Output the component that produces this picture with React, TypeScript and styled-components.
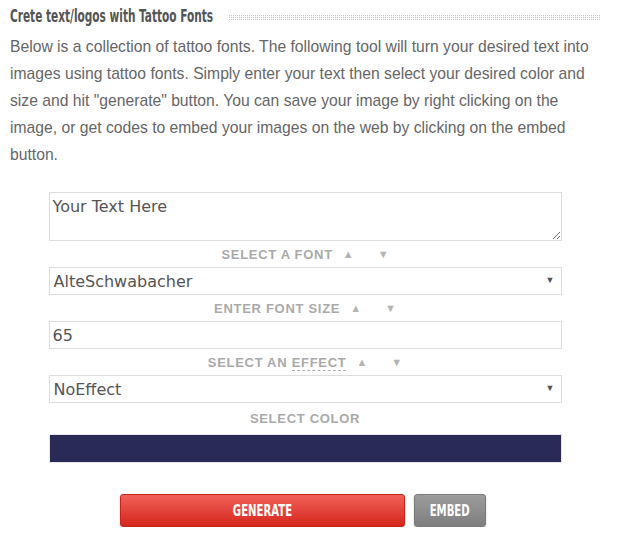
import React from "react";
import styled, { createGlobalStyle } from "styled-components";

const GlobalStyle = createGlobalStyle`
  body {
    margin: 0;
    background: #fff;
    font-family: "Liberation Sans", Arial, sans-serif;
  }
`;

const condensed = `"Liberation Sans Narrow", "DejaVu Sans Condensed", "Roboto Condensed", sans-serif`;

// no condensed display face offline: squeeze the glyphs horizontally
const Squeeze = styled.span<{ $x: number }>`
  display: inline-block;
  transform: scaleX(${(p) => p.$x});
  transform-origin: 0 50%;
`;

const Page = styled.div`
  width: 590px;
  padding: 4px 19px 0 10px;
`;

const HeadingRow = styled.div`
  display: flex;
  align-items: center;
  gap: 14px;
`;

const Title = styled.h2`
  margin: 0;
  width: 204px;
  flex: none;
  font-family: ${condensed};
  font-stretch: condensed;
  font-weight: 700;
  font-size: 17px;
  line-height: 24px;
  color: #555;
  white-space: nowrap;
`;

const Dots = styled.div`
  flex: 1;
  height: 6px;
  margin-top: 1px;
  background:
    linear-gradient(90deg, #fff 1px, transparent 1px) 0 0 / 2px 2px,
    linear-gradient(#fff 1px, #c4c4c4 1px) 0 0 / 2px 2px;
`;

const Intro = styled.p`
  margin: 5px 0 0;
  font-size: 15.7px;
  line-height: 27px;
  color: #666;
`;

const Form = styled.form`
  width: 513px;
  margin: 24px auto 0;
  display: flex;
  flex-direction: column;
`;

const fieldFont = `"DejaVu Sans", Verdana, sans-serif`;

const TextArea = styled.textarea`
  box-sizing: border-box;
  width: 100%;
  height: 49px;
  margin: 0;
  padding: 4px 3px;
  border: 1px solid #ddd;
  font-family: ${fieldFont};
  font-size: 16px;
  color: #555;
  outline: none;
  display: block;
`;

const TextInput = styled.input`
  box-sizing: border-box;
  width: 100%;
  height: 28px;
  margin: 0;
  padding: 0 3px;
  border: 1px solid #ddd;
  font-family: ${fieldFont};
  font-size: 16px;
  color: #555;
  outline: none;
`;

const SelectWrap = styled.div`
  position: relative;
  &::after {
    content: "▼";
    position: absolute;
    right: 7px;
    top: 8px;
    font-size: 9px;
    color: #555;
    pointer-events: none;
  }
`;

const Select = styled.select`
  appearance: none;
  box-sizing: border-box;
  width: 100%;
  height: 28px;
  margin: 0;
  padding: 0 4px;
  border: 1px solid #ddd;
  border-radius: 0;
  background: #fff;
  font-family: ${fieldFont};
  font-size: 16px;
  color: #555;
  outline: none;
`;

const Label = styled.div<{ $tall?: boolean }>`
  height: ${(p) => (p.$tall ? 31 : 26)}px;
  display: flex;
  align-items: center;
  justify-content: center;
  font-size: 13px;
  font-weight: 700;
  letter-spacing: 0.7px;
  color: #aaa;
  abbr {
    text-decoration: none;
    border-bottom: 1px dashed #aaa;
    line-height: 13px;
  }
`;

const Arrows = styled.span`
  display: inline-flex;
  gap: 24px;
  margin-left: 10px;
  font-size: 11px;
  letter-spacing: 0;
  color: #b4b4b4;
  font-weight: 400;
`;

const ColorBar = styled.div`
  height: 29px;
  background: #2a2a56;
  border: 1px solid #e4e4ea;
  box-sizing: border-box;
`;

const Buttons = styled.div`
  display: flex;
  justify-content: center;
  gap: 9px;
  margin-top: 31px;
  padding-right: 4px;
`;

const Button = styled.button<{ $variant: "red" | "gray" }>`
  height: 33px;
  width: ${(p) => (p.$variant === "red" ? 285 : 72)}px;
  display: flex;
  align-items: center;
  justify-content: center;
  border-radius: 3px;
  border: 1px solid ${(p) => (p.$variant === "red" ? "#c8231a" : "#7a7a7a")};
  background: ${(p) =>
    p.$variant === "red"
      ? "linear-gradient(#f0615a, #d6261c)"
      : "linear-gradient(#9c9c9c, #7e7e7e)"};
  box-shadow: 0 1px 2px rgba(0, 0, 0, 0.25);
  font-family: ${condensed};
  font-stretch: condensed;
  font-weight: 700;
  font-size: 15px;
  color: #fff;
  cursor: pointer;
  ${Squeeze} {
    transform-origin: 50% 50%;
  }
`;

const Updown = () => (
  <Arrows>
    <span>▲</span>
    <span>▼</span>
  </Arrows>
);

export default function App() {
  return (
    <Page>
      <GlobalStyle />
      <HeadingRow>
        <Title>
          <Squeeze $x={0.69}>Crete text/logos with Tattoo Fonts</Squeeze>
        </Title>
        <Dots />
      </HeadingRow>
      <Intro>
        Below is a collection of tattoo fonts. The following tool will turn your desired text into images
        using tattoo fonts. Simply enter your text then select your desired color and size and hit
        "generate" button. You can save your image by right clicking on the image, or get codes to embed
        your images on the web by clicking on the embed button.
      </Intro>
      <Form onSubmit={(e) => e.preventDefault()}>
        <TextArea defaultValue="Your Text Here" />
        <Label>
          SELECT A FONT
          <Updown />
        </Label>
        <SelectWrap>
          <Select defaultValue="AlteSchwabacher">
            <option>AlteSchwabacher</option>
          </Select>
        </SelectWrap>
        <Label>
          ENTER FONT SIZE
          <Updown />
        </Label>
        <TextInput defaultValue="65" />
        <Label>
          <span>
            SELECT AN <abbr title="effect">EFFECT</abbr>
          </span>
          <Updown />
        </Label>
        <SelectWrap>
          <Select defaultValue="NoEffect">
            <option>NoEffect</option>
          </Select>
        </SelectWrap>
        <Label $tall>SELECT COLOR</Label>
        <ColorBar />
        <Buttons>
          <Button type="button" $variant="red">
            <Squeeze $x={0.75}>GENERATE</Squeeze>
          </Button>
          <Button type="button" $variant="gray">
            <Squeeze $x={0.75}>EMBED</Squeeze>
          </Button>
        </Buttons>
      </Form>
    </Page>
  );
}
